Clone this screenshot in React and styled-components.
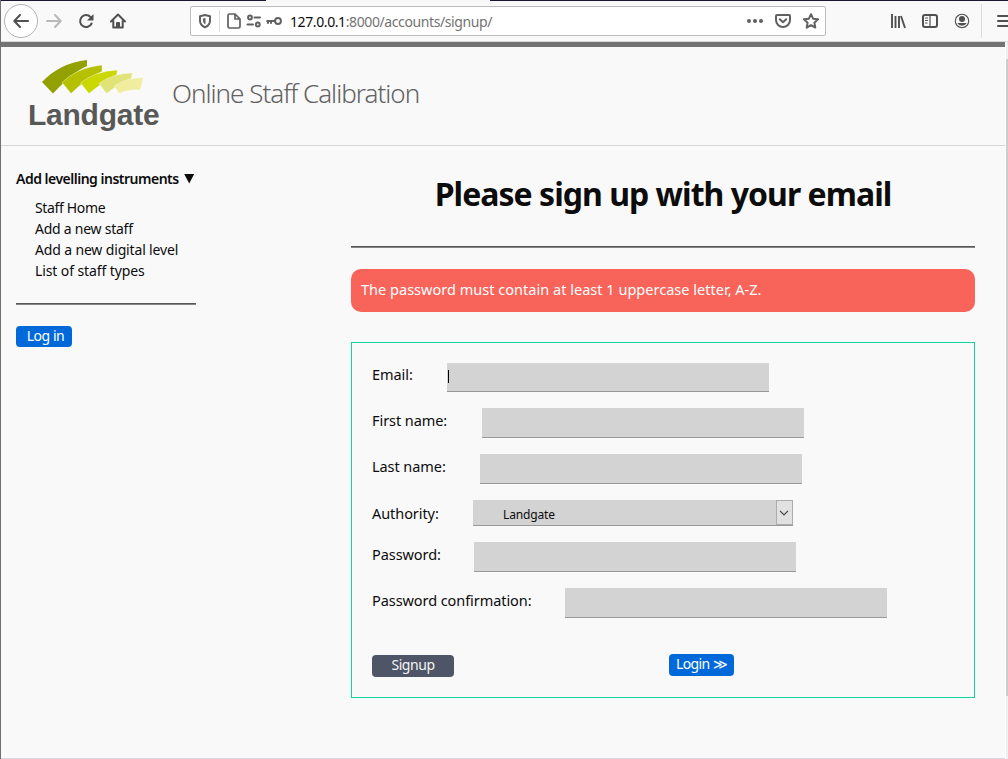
import React from "react";
import styled, { createGlobalStyle } from "styled-components";

const Global = createGlobalStyle`
  *, *::before, *::after { box-sizing: border-box; }
  html, body { margin: 0; padding: 0; overflow: hidden; }
  body { background: #f9f9f9; color: #0c0c0d; font-family: "Noto Sans", "Open Sans", sans-serif; }
`;

const Window = styled.div`
  width: 1008px;
  height: 759px;
  display: flex;
  flex-direction: column;
  border-left: 1px solid #707070;
  background: #f9f9f9;
  overflow: hidden;
`;

const TabEdge = styled.div`
  height: 1px;
  flex: none;
  margin-left: -1px;
  background: linear-gradient(to right, #1a1832 266px, #f5f6f7 266px 490px, #1a1832 490px);
`;

const Toolbar = styled.div`
  height: 41px;
  flex: none;
  display: flex;
  align-items: center;
  padding-left: 3px;
  background: #f9f9fa;
  border-bottom: 1px solid #d8d8d9;
`;

const BackButton = styled.div`
  width: 34px;
  height: 34px;
  flex: none;
  display: flex;
  align-items: center;
  justify-content: center;
  border: 1px solid #b4b4b5;
  border-radius: 50%;
  background: #fff;
`;

const Icon = styled.svg`
  display: block;
  flex: none;
  width: ${(p) => p.$w || 16}px;
  height: ${(p) => p.$h || 16}px;
  margin-left: ${(p) => p.$gap || 0}px;
  fill: none;
  stroke: ${(p) => p.$color || "#505052"};
  stroke-width: 2;
  stroke-linecap: round;
  stroke-linejoin: round;
`;

const UrlBar = styled.div`
  width: 636px;
  height: 30px;
  flex: none;
  display: flex;
  align-items: center;
  margin-left: 64px;
  padding-left: 6px;
  border: 1px solid #bcbcbd;
  border-radius: 2px;
  background: #fff;
  ${Icon} { stroke: #606062; }
`;

const Divider = styled.div`
  width: 1px;
  flex: none;
  height: ${(p) => p.$h}px;
  margin-left: ${(p) => p.$gap}px;
  background: #dcdcdd;
`;

const Url = styled.div`
  width: 457px;
  flex: none;
  margin: 2px 0 0 8px;
  font-size: 14px;
  line-height: 20px;
  letter-spacing: -0.4px;
  color: #737373;
  white-space: nowrap;
  b { font-weight: 400; color: #0c0c0d; }
`;

const Viewport = styled.div`
  flex: 1;
  display: flex;
  min-height: 0;
`;

const Page = styled.div`
  width: 1004px;
  flex: none;
  border-top: 5px solid #737373;
  border-bottom: 1px solid #d7d7dc;
`;

const Scrollbar = styled.div`
  width: 3px;
  flex: none;
  padding-top: 17px;
  border-left: 1px solid #fff;
  background: #f0f0f0;
`;

const Thumb = styled.div`
  height: 637px;
  background: #cdcdcd;
`;

const Header = styled.header`
  height: 99px;
  display: flex;
  border-bottom: 1px solid #d5d5da;
`;

const Brand = styled.div`
  width: 133px;
  margin: 12px 0 0 27px;
`;

const BrandMark = styled.svg`
  display: block;
  width: 104px;
  height: 36px;
  margin-left: 14px;
`;

const BrandName = styled.div`
  margin-top: 1px;
  font: 700 30px/38px "Liberation Sans", Arial, sans-serif;
  letter-spacing: -0.25px;
  color: #585857;
`;

const SiteTitle = styled.div`
  margin: 26px 0 0 11px;
  font: 300 26px/40px "Noto Sans", "Open Sans", sans-serif;
  letter-spacing: -1px;
  color: #626262;
  white-space: nowrap;
`;

const Body = styled.div`
  display: flex;
  padding-left: 15px;
`;

const Sidebar = styled.nav`
  width: 180px;
  padding-top: 22px;
`;

const MenuTitle = styled.div`
  display: flex;
  align-items: center;
  justify-content: space-between;
  height: 20px;
  font-size: 14px;
  font-weight: 600;
  letter-spacing: -0.5px;
  white-space: nowrap;
`;

const Menu = styled.ul`
  list-style: none;
  margin: 9px 0 0;
  padding: 0 0 0 19px;
`;

const MenuItem = styled.li`
  height: 21px;
  font-size: 14px;
  line-height: 21px;
  letter-spacing: ${(p) => p.$track}px;
  white-space: nowrap;
`;

const Rule = styled.div`
  height: 2px;
  margin-top: ${(p) => p.$gap}px;
  background: linear-gradient(#58585a 1px, #858586 1px);
`;

const Button = styled.span`
  display: flex;
  align-items: center;
  justify-content: center;
  width: ${(p) => p.$w}px;
  height: ${(p) => p.$h || 22}px;
  padding-bottom: 2px;
  border-radius: 4px;
  background: ${(p) => (p.$dark ? "#4d5566" : "#0069d9")};
  color: ${(p) => (p.$dark ? "#f3f3f3" : "#fff")};
  font-size: 14px;
  line-height: 20px;
  letter-spacing: ${(p) => p.$track || -0.45}px;
  white-space: nowrap;
`;

const LoginSlot = styled.div`
  margin-top: 21px;
  ${Button} { padding-left: 3px; }
`;

const Main = styled.main`
  width: 624px;
  margin-left: 155px;
`;

const Heading = styled.h1`
  margin: 23px 0 0;
  font-size: 32px;
  font-weight: 700;
  line-height: 50px;
  letter-spacing: -0.97px;
  text-align: center;
  white-space: nowrap;
`;

const Alert = styled.div`
  height: 43px;
  margin-top: 21px;
  padding: 0 10px;
  border-radius: 10px;
  background: #f8635a;
  color: #fff;
  font-size: 14.5px;
  line-height: 40px;
  letter-spacing: 0.02px;
`;

const Form = styled.div`
  height: 356px;
  margin-top: 30px;
  padding: 20px;
  border: 1px solid #0fd49b;
`;

const Field = styled.div`
  display: flex;
  height: ${(p) => p.$h || 46}px;
`;

const Label = styled.label`
  width: ${(p) => p.$w}px;
  flex: none;
  font-size: 14.5px;
  line-height: ${(p) => p.$line || 25}px;
  letter-spacing: -0.07px;
  white-space: nowrap;
`;

const Input = styled.div`
  width: 322px;
  height: ${(p) => p.$h || 30}px;
  display: flex;
  align-items: center;
  padding-left: 1px;
  border-bottom: 1px solid #999;
  background: #d3d3d3;
`;

const Caret = styled.span`
  width: 1px;
  height: 13px;
  margin-bottom: 2px;
  background: #000;
`;

const Select = styled.div`
  width: 320px;
  height: 26px;
  display: flex;
  justify-content: space-between;
  padding-left: 30px;
  border-bottom: 1px solid #999;
  background: #d3d3d3;
  font-size: 12px;
  line-height: 29px;
  letter-spacing: -0.15px;
`;

const Arrow = styled.span`
  width: 17px;
  height: 25px;
  display: flex;
  align-items: center;
  justify-content: center;
  padding-right: 1px;
  border: 1px solid #adadad;
  background: #e1e1e1;
`;

const Actions = styled.div`
  display: flex;
  align-items: flex-start;
  gap: 215px;
  padding-top: 20px;
  ${Button}:first-child { margin-top: 1px; }
`;

const links = [
  ["Staff Home", -0.35],
  ["Add a new staff", -0.25],
  ["Add a new digital level", -0.15],
  ["List of staff types", -0.1],
];

export default function App() {
  return (
    <>
      <Global />
      <Window>
        <TabEdge />
        <Toolbar>
          <BackButton>
            <Icon viewBox="0 0 16 16"><path d="M15 8H1.5M7 2 1.3 8 7 14" /></Icon>
          </BackButton>
          <Icon $gap={8} $color="#b9b9ba" viewBox="0 0 16 16"><path d="M1 8h13.5M9 2l5.700 6L9 14" /></Icon>
          <Icon $gap={16} viewBox="0 0 16 16"><path d="M13.600 10.500A6 6 0 1 1 12.500 4L14 5.700" /><path d="M15.500 1v6.500H9Z" fill="#505052" stroke="none" /></Icon>
          <Icon $gap={16} viewBox="0 0 16 16"><path d="M1 8.500 8 1.500l7 7M3.300 8v6.500h9.400V8M7 14v-4h2v4" /></Icon>
          <UrlBar>
            <Icon viewBox="0 0 16 16"><path d="M8 2 13 3.200v4.200C13 11 11 13 8 14.200 5 13 3 11 3 7.400V3.200L8 2Z" /><path d="M8.500 5v6.500c-1.700-1-2.500-2.300-2.500-4V5.500Z" fill="#606062" stroke="none" /></Icon>
            <Divider $h={22} $gap={6} />
            <Icon $gap={6} viewBox="0 0 16 16"><path d="M3.500 1H9l5 5v7.500q0 1.500-1.500 1.500h-9Q2 15 2 13.500v-11Q2 1 3.500 1ZM9 1.500V6h4.500" strokeWidth="1.700" /></Icon>
            <Icon $gap={4} viewBox="0 0 16 16"><circle cx="4" cy="4.500" r="1.900" /><path d="M8.500 4.500H14M1.500 11.500H7" /><circle cx="11.800" cy="11.500" r="1.900" /></Icon>
            <Icon $gap={4} viewBox="0 0 16 16"><circle cx="12" cy="8" r="2.900" /><path d="M9 8H1.200M2 8v2M5 8v2" /></Icon>
            <Url><b>127.0.0.1</b>:8000/accounts/signup/</Url>
            <Icon viewBox="0 0 16 16"><g fill="#606062" stroke="none"><circle cx="2" cy="8" r="2" /><circle cx="8" cy="8" r="2" /><circle cx="14" cy="8" r="2" /></g></Icon>
            <Icon viewBox="0 0 16 16" $gap={12}><path d="M2 2h12q1 0 1 1v4a7 7 0 0 1-14 0V3q0-1 1-1ZM4.800 6.300 8 9.300l3.200-3" /></Icon>
            <Icon viewBox="0 0 16 16" $gap={12}><path d="m8 1.200 2.100 4.500 4.900.6-3.600 3.400.9 4.900L8 12.200l-4.300 2.400.9-4.900L1 6.300l4.900-.6Z" /></Icon>
          </UrlBar>
          <Icon $gap={64} viewBox="0 0 16 16"><path strokeLinecap="butt" d="M2 1v14M5.500 3v12M9 3v12M11 3l4 12" strokeWidth="1.900" /></Icon>
          <Icon $gap={16} viewBox="0 0 16 16"><rect x="1" y="2" width="14" height="12" rx="2" /><path strokeWidth="1.200" d="M8 2v12M3.500 5h2M3.500 7.500h2M3.500 10h1.500" /></Icon>
          <Icon $gap={16} viewBox="0 0 16 16"><circle cx="8" cy="8" r="6.700" strokeWidth="1.100" /><g fill="#505052" stroke="none"><circle cx="8" cy="6" r="3" /><path d="M3.300 10h9.400A5.400 5.400 0 0 1 3.300 10Z" /></g></Icon>
          <Divider $h={34} $gap={11} />
          <Icon $gap={14} viewBox="0 0 16 16"><path d="M2 3h12M2 8h12M2 13h12" /></Icon>
        </Toolbar>
        <Viewport>
          <Page>
            <Header>
              <Brand>
                <BrandMark viewBox="0 0 104 36">
                  <path d="M0 23Q18 4 45 1v6Q31 13 11 34.500Z" fill="#92a000" />
                  <g stroke="#f9f9f9" strokeWidth=".4">
                    <path d="M20 23.500Q34 9 60 6v6.500Q46 18 29 34.500Z" fill="#b5c000" />
                    <path d="M38.500 24Q53 12 75.500 11l-1 5.500Q62 22 47 34.500Z" fill="#cbd700" />
                    <path d="M57 24.500Q71 14 90.500 14l-2 7.500Q78 24 64.500 34.500Z" fill="#dfe378" />
                    <path d="M72.500 27Q84 18.500 101.500 18.700L98 31Q86 30 77 34.700Z" fill="#f0ed9f" />
                  </g>
                </BrandMark>
                <BrandName>Landgate</BrandName>
              </Brand>
              <SiteTitle>Online Staff Calibration</SiteTitle>
            </Header>
            <Body>
              <Sidebar>
                <MenuTitle>
                  Add levelling instruments
                  <svg width="12" height="11"><path d="M.2 1h10L5.200 10.500Z" fill="#0c0c0d" /></svg>
                </MenuTitle>
                <Menu>
                  {links.map(([text, track]) => <MenuItem key={text} $track={track}>{text}</MenuItem>)}
                </Menu>
                <Rule $gap={22} />
                <LoginSlot><Button $w={56} $h={21}>Log in</Button></LoginSlot>
              </Sidebar>
              <Main>
                <Heading>Please sign up with your email</Heading>
                <Rule $gap={27} />
                <Alert>The password must contain at least 1 uppercase letter, A-Z.</Alert>
                <Form>
                  <Field $h={45}><Label $w={75} $line={23}>Email:</Label><Input $h={29}><Caret /></Input></Field>
                  <Field><Label $w={110}>First name:</Label><Input /></Field>
                  <Field><Label $w={108}>Last name:</Label><Input /></Field>
                  <Field $h={42}>
                    <Label $w={101} $line={27}>Authority:</Label>
                    <Select>
                      Landgate
                      <Arrow><svg width="10" height="6"><path d="M1 .8 5 4.800 9 .8" fill="none" stroke="#444" strokeWidth="1.200" /></svg></Arrow>
                    </Select>
                  </Field>
                  <Field><Label $w={102}>Password:</Label><Input /></Field>
                  <Field><Label $w={193}>Password confirmation:</Label><Input /></Field>
                  <Actions>
                    <Button $dark $w={82}>Signup</Button>
                    <Button $w={65} $track={-0.65}>Login ≫</Button>
                  </Actions>
                </Form>
              </Main>
            </Body>
          </Page>
          <Scrollbar><Thumb /></Scrollbar>
        </Viewport>
      </Window>
    </>
  );
}
